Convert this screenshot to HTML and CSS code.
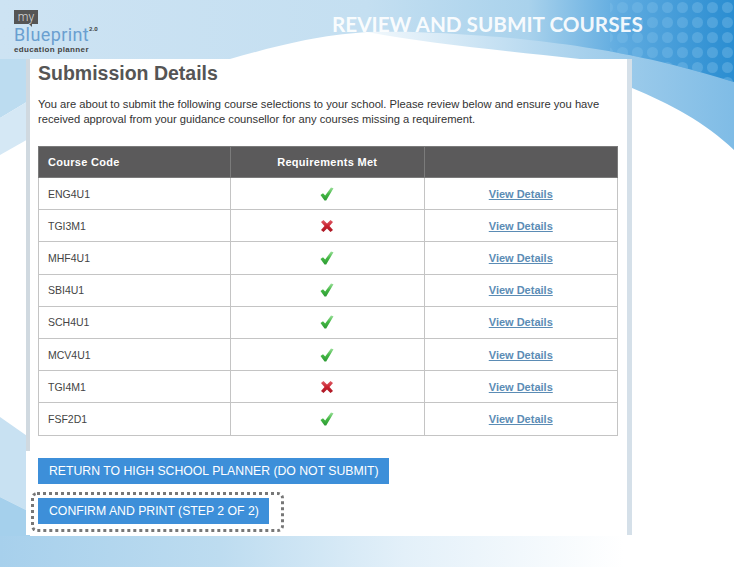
FILE: index.html
```html
<!DOCTYPE html>
<html lang="en">
<head>
<meta charset="UTF-8">
<title>Review and Submit Courses</title>
<link rel="stylesheet" href="styles.css">
</head>
<body>

<div class="slide">
  <!-- slide artwork behind everything -->
  <svg class="slide-bg" width="734" height="567" viewBox="0 0 734 567">
    <defs>
      <linearGradient id="band" x1="0" y1="0" x2="734" y2="0" gradientUnits="userSpaceOnUse">
        <stop offset="0" stop-color="#cde3f3"/>
        <stop offset="0.5" stop-color="#c4dff1"/>
        <stop offset="0.72" stop-color="#a9d2ec"/>
        <stop offset="0.845" stop-color="#5fabe0"/>
        <stop offset="1" stop-color="#2a8dd1"/>
      </linearGradient>
      <linearGradient id="under" x1="367" y1="0" x2="734" y2="0" gradientUnits="userSpaceOnUse">
        <stop offset="0" stop-color="#f2f8fc"/>
        <stop offset="0.6" stop-color="#a6d0ec"/>
        <stop offset="1" stop-color="#7fbce6"/>
      </linearGradient>
      <linearGradient id="foot" x1="0" y1="0" x2="1" y2="0">
        <stop offset="0" stop-color="#a7d0ec"/>
        <stop offset="0.3" stop-color="#bddcf0"/>
        <stop offset="0.55" stop-color="#e3f0f9"/>
        <stop offset="0.85" stop-color="#ffffff"/>
      </linearGradient>
      <linearGradient id="checkFill" x1="0" y1="0" x2="0" y2="1">
        <stop offset="0" stop-color="#9adf9a"/>
        <stop offset="0.5" stop-color="#45b845"/>
        <stop offset="1" stop-color="#2c9a33"/>
      </linearGradient>
      <linearGradient id="crossFill" x1="0" y1="0" x2="0" y2="1">
        <stop offset="0" stop-color="#e0606a"/>
        <stop offset="0.5" stop-color="#c9212f"/>
        <stop offset="1" stop-color="#a81824"/>
      </linearGradient>
      <pattern id="dots" width="15" height="15" patternUnits="userSpaceOnUse">
        <circle cx="7.5" cy="7.5" r="5.5" fill="#7cbde8" opacity="0.4"/>
      </pattern>
      <clipPath id="bandClip">
        <path d="M0 0H734V82C680 66 620 48 500 37C440 32 400 31 367 32C310 36 270 48 230 59H0Z"/>
      </clipPath>
      <symbol id="icon-yes" viewBox="0 0 14 14">
        <path d="M0.5 8L3 6.2L5.2 8.4L11 0.5L13.5 1.2L6.2 13.5H4.5Z" fill="url(#checkFill)"/>
      </symbol>
      <symbol id="icon-no" viewBox="0 0 14 14">
        <path d="M1 3L3.5 1L7 4.5L10.5 1L13 3L9.5 7L13 11L10.5 13L7 9.5L3.5 13L1 11L4.5 7Z" fill="url(#crossFill)"/>
      </symbol>
    </defs>
    <rect width="734" height="567" fill="#fff"/>
    <path d="M0 0H30V100L0 118Z" fill="#bcdcf0"/>
    <path d="M0 118L30 100V138L0 155Z" fill="#d5e8f5"/>
    <path d="M0 417L30 438V512L0 497Z" fill="#c8e1f2"/>
    <path d="M0 497L30 512V567H0Z" fill="#a5d0ec"/>
    <path d="M367 32C430 44 500 50 580 59L632 88C670 104 705 122 734 150V0H367Z" fill="url(#under)"/>
    <path d="M0 0H734V82C680 66 620 48 500 37C440 32 400 31 367 32C310 36 270 48 230 59H0Z" fill="url(#band)"/>
    <rect x="610" y="0" width="124" height="84" fill="url(#dots)" clip-path="url(#bandClip)"/>
    <rect y="536" width="734" height="31" fill="url(#foot)"/>
  </svg>

  <header class="slide-head">
    <div class="logo">
      <span class="logo-my">my</span>
      <span class="logo-name">Blueprint<sup>2.0</sup></span>
      <span class="logo-sub">education planner</span>
    </div>
    <h1>REVIEW AND SUBMIT COURSES</h1>
  </header>

  <main class="panel">
    <h2>Submission Details</h2>
    <p class="intro">You are about to submit the following course selections to your school. Please review below and ensure you have received approval from your guidance counsellor for any courses missing a requirement.</p>

    <table class="courses">
      <thead>
        <tr><th class="code">Course Code</th><th>Requirements Met</th><th></th></tr>
      </thead>
      <tbody>
        <tr><td class="code">ENG4U1</td><td><svg class="mark"><use href="#icon-yes"/></svg></td><td><a href="#">View Details</a></td></tr>
        <tr><td class="code">TGI3M1</td><td><svg class="mark"><use href="#icon-no"/></svg></td><td><a href="#">View Details</a></td></tr>
        <tr><td class="code">MHF4U1</td><td><svg class="mark"><use href="#icon-yes"/></svg></td><td><a href="#">View Details</a></td></tr>
        <tr><td class="code">SBI4U1</td><td><svg class="mark"><use href="#icon-yes"/></svg></td><td><a href="#">View Details</a></td></tr>
        <tr><td class="code">SCH4U1</td><td><svg class="mark"><use href="#icon-yes"/></svg></td><td><a href="#">View Details</a></td></tr>
        <tr><td class="code">MCV4U1</td><td><svg class="mark"><use href="#icon-yes"/></svg></td><td><a href="#">View Details</a></td></tr>
        <tr><td class="code">TGI4M1</td><td><svg class="mark"><use href="#icon-no"/></svg></td><td><a href="#">View Details</a></td></tr>
        <tr><td class="code">FSF2D1</td><td><svg class="mark"><use href="#icon-yes"/></svg></td><td><a href="#">View Details</a></td></tr>
      </tbody>
    </table>

    <div class="actions">
      <button class="btn">RETURN TO HIGH SCHOOL PLANNER (DO NOT SUBMIT)</button>
      <div class="callout"><button class="btn">CONFIRM AND PRINT (STEP 2 OF 2)</button></div>
    </div>
  </main>
</div>

</body>
</html>
```

FILE: styles.css
```css
body {
  margin: 0;
  background: white;
  font-family: "Liberation Sans", Arial, sans-serif;
}

.slide {
  position: relative;
  width: 734px;
  height: 567px;
  overflow: hidden;
}

.slide-bg {
  position: absolute;
  left: 0;
  top: 0;
}

.slide-head {
  position: relative;
  height: 59px;
  display: flex;
  align-items: flex-start;
}

.logo {
  width: 332px;
  padding: 10px 0 0 14px;
  box-sizing: border-box;
  display: flex;
  flex-direction: column;
  align-items: flex-start;
}

.logo-my {
  position: relative;
  background: #555;
  color: #ddd;
  font-family: Roboto, sans-serif;
  font-size: 12px;
  font-weight: 300;
  line-height: 14px;
  width: 24px;
  text-align: center;
}

/* little speech bubble tail */
.logo-my::after {
  content: "";
  position: absolute;
  left: 15px;
  top: 14px;
  border-top: 3px solid #555;
  border-left: 3px solid transparent;
}

.logo-name {
  color: #6a9fd0;
  font-family: Roboto, sans-serif;
  font-size: 18px;
  line-height: 21px;
  letter-spacing: 0.4px;
}

.logo-name sup {
  color: #444;
  font-size: 6px;
  font-weight: bold;
  line-height: 0;
  letter-spacing: 0;
  vertical-align: 10px;
}

.logo-sub {
  color: #444;
  font-size: 8px;
  font-weight: bold;
  line-height: 9px;
  letter-spacing: 0.35px;
}

h1 {
  margin: 11px 0 0;
  color: rgba(255, 255, 255, 0.92);
  font-family: Lato, sans-serif;
  font-size: 20.7px;
  font-weight: bold;
  line-height: 26px;
  white-space: nowrap;
}

.panel {
  position: relative;
  width: 606px;
  height: 476px;
  margin-left: 26px;
  padding: 3px 10px 0 12px;
  box-sizing: border-box;
  background: linear-gradient(#d0d9e0, #d0d9e0) left top / 4px 392px no-repeat, white;
  border-right: 5px solid #d5e0e9;
}

h2 {
  margin: 0;
  color: #555;
  font-size: 19.5px;
  line-height: 22px;
}

.intro {
  margin: 13px 0 0;
  width: 565px;
  color: #333;
  font-size: 11.2px;
  line-height: 15px;
}

.courses {
  margin-top: 19px;
  width: 580px;
  border-collapse: collapse;
  table-layout: fixed;
  font-size: 11px;
}

.courses th,
.courses td {
  border: 1px solid #c4c4c4;
  padding: 0;
  text-align: center;
  height: 31.2px;
  vertical-align: middle;
}

.courses th {
  height: 30px;
  background: #5b5a5b;
  border-color: #7b7b7b;
  color: white;
  letter-spacing: 0.3px;
}

.courses th.code,
.courses td.code {
  text-align: left;
  padding-left: 9px;
  width: 182px;
}

.courses td.code {
  color: #444;
  font-size: 10.5px;
}

.courses a {
  color: #5b8cb5;
  font-weight: bold;
}

.mark {
  display: block;
  width: 14px;
  height: 14px;
  margin: 0 auto;
}

.actions {
  margin-top: 22px;
  display: flex;
  flex-direction: column;
  align-items: flex-start;
  gap: 14px;
}

.btn {
  height: 26px;
  padding: 0 10px 0 11px;
  border: 0;
  background: #3d8fd9;
  color: white;
  font-family: inherit;
  font-size: 12.25px;
  white-space: nowrap;
}

.callout {
  position: relative;
}

.callout::after {
  content: "";
  position: absolute;
  left: -7px;
  right: -15px;
  top: -6px;
  bottom: -8px;
  border: 3px dotted #777;
  border-radius: 6px;
}
```
